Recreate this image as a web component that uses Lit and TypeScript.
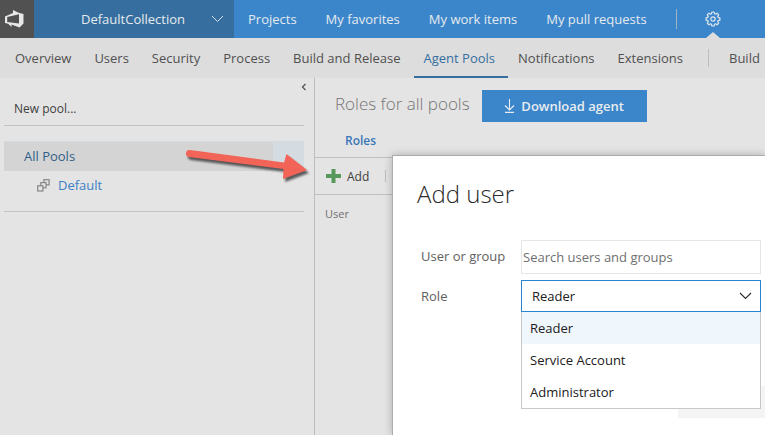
import { LitElement, html, css } from "lit";
import { customElement, state } from "lit/decorators.js";
import { classMap } from "lit/directives/class-map.js";

const HUBS = ["Projects", "My favorites", "My work items", "My pull requests"];
const TABS = [
  "Overview",
  "Users",
  "Security",
  "Process",
  "Build and Release",
  "Agent Pools",
  "Notifications",
  "Extensions",
];
const ROLES = ["Reader", "Service Account", "Administrator"];

const base = css`
  :host {
    display: block;
    box-sizing: border-box;
    font-family: "Open Sans", "Noto Sans", sans-serif;
  }
  *,
  *::before,
  *::after {
    box-sizing: border-box;
  }
  a {
    color: inherit;
    text-decoration: none;
    white-space: nowrap;
  }
  button,
  input,
  select {
    font: inherit;
    margin: 0;
    border: 0;
    border-radius: 0;
    background: none;
    color: inherit;
    white-space: nowrap;
  }
  svg {
    display: block;
    flex: none;
  }
`;

@customElement("top-bar")
class TopBar extends LitElement {
  static styles = [
    base,
    css`
      .bar {
        display: flex;
        height: 38px;
        overflow: hidden;
        background: #3b86ca;
        color: #e6eaee;
        font-size: 13px;
      }
      .logo {
        display: flex;
        align-items: center;
        flex: none;
        width: 34px;
        padding-left: 5px;
        background: #515151;
      }
      .collection {
        display: flex;
        align-items: center;
        justify-content: space-between;
        flex: none;
        width: 200px;
        padding: 0 10px 0 47px;
        background: #366f9f;
      }
      .hubs {
        display: flex;
        align-items: center;
        gap: 29px;
        padding: 0 29px 0 14px;
      }
      .divider {
        flex: none;
        align-self: center;
        width: 1px;
        height: 20px;
        background: #9fb3c6;
      }
      .gear {
        position: relative;
        display: flex;
        align-items: center;
        flex: none;
        padding: 0 8px;
        margin-left: 20px;
      }
      .gear::after {
        content: "";
        position: absolute;
        left: 9px;
        bottom: 0;
        border: 7px solid transparent;
        border-top: 0;
        border-bottom: 6px solid #dddddd;
      }
    `,
  ];

  render() {
    return html`<header class="bar">
      <a class="logo" href="#" aria-label="Home">
        <svg width="20" height="20" viewBox="0 0 20 20" fill="#e8e8e8">
          <path
            fill-rule="evenodd"
            d="M0 7.500 L8 4 V1 L13.500 3.800 L18.500 5 V14.500 L14.500 18.500 L6.500 15.500 V18 L3.200 14.800 L0 14 Z M2.200 8 V13 L14 14.600 V5.300 Z"
          />
        </svg>
      </a>
      <button class="collection">
        DefaultCollection
        <svg width="13" height="8" viewBox="0 0 13 8" fill="none" stroke="#d7e0e8">
          <path d="M1 1 L6.5 6.5 L12 1" />
        </svg>
      </button>
      <nav class="hubs">${HUBS.map((h) => html`<a href="#">${h}</a>`)}</nav>
      <span class="divider"></span>
      <a class="gear" href="#" aria-label="Settings">
        <svg width="16" height="16" viewBox="0 0 16 16" fill="none" stroke="#dfe7ee" stroke-width="1.2" stroke-linejoin="round">
          <path
            d="M6.900 1h2.200l.4 1.700 1.100.5 1.500-1 1.600 1.600-1 1.500.5 1.100 1.700.4v2.400l-1.700.4-.5 1.100 1 1.500-1.600 1.600-1.500-1-1.100.5-.4 1.700H6.900l-.4-1.700-1.100-.5-1.500 1-1.600-1.600 1-1.500-.5-1.100L1.100 9.200V6.800l1.700-.4.5-1.100-1-1.500 1.600-1.600 1.500 1 1.100-.5z"
          />
          <circle cx="8" cy="8" r="2.200" />
        </svg>
      </a>
    </header>`;
  }
}

@customElement("tab-bar")
class TabBar extends LitElement {
  static styles = [
    base,
    css`
      .tabs {
        display: flex;
        height: 40px;
        overflow: hidden;
        padding-left: 5px;
        background: #dddddd;
        color: #505050;
        font-size: 13px;
      }
      .tab {
        flex: none;
        padding: 0 13px 0 10px;
        line-height: 40px;
      }
      .current {
        color: #366f9f;
        border-bottom: 2px solid #366f9f;
      }
      .divider {
        flex: none;
        align-self: center;
        width: 1px;
        height: 18px;
        margin: 0 10px 0 12px;
        background: #bdbdbd;
      }
    `,
  ];

  render() {
    return html`<nav class="tabs">
      ${TABS.map(
        (t) => html`<a href="#" class=${classMap({ tab: true, current: t === "Agent Pools" })}>${t}</a>`
      )}
      <span class="divider"></span>
      <a href="#" class="tab">Build</a>
    </nav>`;
  }
}

@customElement("pool-list")
class PoolList extends LitElement {
  static styles = [
    base,
    css`
      .panel {
        display: flex;
        flex-direction: column;
        padding: 0 10px 0 4px;
        font-size: 12px;
      }
      .collapse {
        align-self: flex-end;
        display: flex;
        padding: 5px 0 0;
        margin-right: -3px;
      }
      .new {
        align-self: flex-start;
        height: 34px;
        padding: 0 10px;
        color: #404040;
      }
      .pools {
        display: flex;
        flex-direction: column;
        padding: 15px 0 12px;
        border: solid #c3c3c3;
        border-width: 1px 0;
        font-size: 13px;
      }
      .all {
        display: block;
        border-right: 31px solid #d5dce1;
        border-top: 1px solid #d5dce1;
        background: #d4d4d4;
        padding-left: 20px;
        line-height: 29px;
        color: #315f88;
      }
      .pool {
        display: flex;
        align-items: center;
        gap: 8px;
        height: 28px;
        padding-left: 33px;
        color: #3c80c4;
      }
    `,
  ];

  render() {
    return html`<aside class="panel">
      <button class="collapse" aria-label="Collapse">
        <svg width="6" height="8" viewBox="0 0 6 8" fill="none" stroke="#505050" stroke-width="1.2">
          <path d="M4.5 1 L1.5 4 L4.5 7" />
        </svg>
      </button>
      <button class="new">New pool...</button>
      <nav class="pools">
        <a class="all" href="#">All Pools</a>
        <a class="pool" href="#">
          <svg width="13" height="13" viewBox="0 0 13 13" fill="#e4e4e4" stroke="#858585" stroke-width="1.2">
            <rect x="6.9" y="0.7" width="5.2" height="5.2" />
            <rect x="3.8" y="3.6" width="5.2" height="5.2" />
            <rect x="0.7" y="6.8" width="5.2" height="5.2" />
          </svg>
          Default
        </a>
      </nav>
    </aside>`;
  }
}

@customElement("roles-panel")
class RolesPanel extends LitElement {
  static styles = [
    base,
    css`
      .head {
        display: flex;
        align-items: flex-start;
        gap: 12px;
        padding: 12px 20px 0;
      }
      .title {
        margin: 0;
        color: #757575;
        font-size: 17px;
        font-weight: 300;
        line-height: 28px;
        white-space: nowrap;
      }
      .download {
        display: flex;
        align-items: center;
        justify-content: center;
        gap: 6px;
        width: 165px;
        height: 32px;
        background: #3b86ca;
        color: #e8ecf0;
        font-size: 13px;
        font-weight: 600;
      }
      .tab {
        display: block;
        padding: 0 30px;
        height: 35px;
        line-height: 38px;
        color: #3b77b8;
        font-size: 12px;
        font-weight: 600;
      }
      .tools {
        display: flex;
        align-items: center;
        gap: 16px;
        height: 38px;
        padding-left: 11px;
        border: solid #c0c0c0;
        border-width: 1px 0;
      }
      .add {
        display: flex;
        align-items: center;
        gap: 6px;
        padding: 0;
        color: #404040;
        font-size: 12px;
      }
      .divider {
        width: 1px;
        height: 12px;
        background: #bdbdbd;
      }
      .grid {
        width: 100%;
        border-spacing: 0;
        font-size: 11px;
      }
      .cell {
        padding: 0 10px;
        text-align: left;
        font-weight: 400;
        line-height: 38px;
        color: #707070;
      }
    `,
  ];

  render() {
    return html`<section>
      <div class="head">
        <h1 class="title">Roles for all pools</h1>
        <button class="download">
          <svg width="11" height="14" viewBox="0 0 11 14" fill="none" stroke="#e8ecf0" stroke-width="1.1">
            <path d="M5.5 0 V11 M1 6.5 L5.5 11 L10 6.5 M1 13.4 H10" />
          </svg>
          Download agent
        </button>
      </div>
      <a class="tab" href="#">Roles</a>
      <div class="tools">
        <button class="add">
          <svg width="15" height="14" viewBox="0 0 15 14" fill="#56995a">
            <path d="M5.5 0h4v5H15v4H9.500v5h-4V9H0V5h5.500z" />
          </svg>
          Add
        </button>
        <span class="divider"></span>
      </div>
      <table class="grid">
        <thead>
          <tr><th class="cell" scope="col">User</th></tr>
        </thead>
      </table>
    </section>`;
  }
}

@customElement("add-user-dialog")
class AddUserDialog extends LitElement {
  @state() private role = "Reader";

  static styles = [
    base,
    css`
      .dialog {
        height: 100%;
        padding: 20px 4px 0 24px;
        border: solid #ababab;
        border-width: 1px 0 0 1px;
        background: #ffffff;
        box-shadow: 0 0 8px rgba(0, 0, 0, 0.25);
        font-size: 13px;
        color: #606060;
      }
      .title {
        margin: 0 0 28px;
        color: #2b2b2b;
        font-size: 24px;
        font-weight: 300;
        line-height: 36px;
      }
      .form {
        display: grid;
        grid-template-columns: 104px 1fr;
        row-gap: 6px;
      }
      .label {
        padding-left: 4px;
        line-height: 32px;
        white-space: nowrap;
      }
      .search {
        width: 100%;
        height: 34px;
        padding: 0 1px;
        border: 1px solid #e6e6e6;
      }
      .search::placeholder {
        color: #707070;
        opacity: 1;
      }
      .picker {
        position: relative;
        color: #202020;
      }
      .select {
        appearance: none;
        display: block;
        width: 100%;
        height: 32px;
        padding: 0 10px;
        border: 1px solid #2a84d2;
      }
      .chevron {
        position: absolute;
        top: 12px;
        right: 9px;
        pointer-events: none;
      }
      .menu {
        position: absolute;
        top: 100%;
        left: 0;
        right: 0;
        z-index: 1;
        margin: 0;
        padding: 0;
        border: 1px solid #c8c8c8;
        border-top: 0;
        background: #ffffff;
        list-style: none;
      }
      .option {
        padding-left: 8px;
        line-height: 32px;
      }
      .chosen {
        background: #eff6fc;
      }
      .actions {
        display: flex;
        justify-content: flex-end;
        margin: 74px -4px 0 0;
      }
      .action {
        width: 87px;
        height: 32px;
        background: #f4f4f4;
      }
    `,
  ];

  render() {
    return html`<section class="dialog" role="dialog" aria-labelledby="title">
      <h2 class="title" id="title">Add user</h2>
      <div class="form">
        <label class="label" for="user">User or group</label>
        <input class="search" id="user" type="text" placeholder="Search users and groups" />
        <label class="label" for="role">Role</label>
        <div class="picker">
          <select
            class="select"
            id="role"
            .value=${this.role}
            @change=${(e: Event) => (this.role = (e.target as HTMLSelectElement).value)}
          >
            ${ROLES.map((r) => html`<option>${r}</option>`)}
          </select>
          <svg class="chevron" width="13" height="8" viewBox="0 0 13 8" fill="none" stroke="#303030" stroke-width="1.2">
            <path d="M1 1 L6.500 6.500 L12 1" />
          </svg>
          <ul class="menu" role="listbox" aria-label="Role">
            ${ROLES.map(
              (r) => html`<li
                role="option"
                aria-selected=${r === this.role}
                class=${classMap({ option: true, chosen: r === this.role })}
                @click=${() => (this.role = r)}
              >${r}</li>`
            )}
          </ul>
        </div>
      </div>
      <div class="actions"><button class="action" aria-label="Add"></button></div>
    </section>`;
  }
}

@customElement("app-root")
class AppRoot extends LitElement {
  static styles = [
    base,
    css`
      :host {
        position: relative;
        display: flex;
        flex-direction: column;
        min-height: 100vh;
        overflow: hidden;
        background: #e4e4e4;
      }
      .body {
        display: grid;
        grid-template-columns: 314px 1fr;
        flex: 1;
      }
      .main {
        min-width: 0;
        border-left: 1px solid #bdbdbd;
      }
      .dialog {
        position: absolute;
        top: 155px;
        left: 392px;
        right: 0;
        bottom: 0;
      }
      .pointer {
        position: absolute;
        top: 144px;
        left: 182px;
        pointer-events: none;
        filter: drop-shadow(2px 3px 1px rgba(0, 0, 0, 0.6));
      }
    `,
  ];

  render() {
    return html`
      <top-bar></top-bar>
      <tab-bar></tab-bar>
      <div class="body">
        <pool-list></pool-list>
        <roles-panel class="main"></roles-panel>
      </div>
      <add-user-dialog class="dialog"></add-user-dialog>
      <svg class="pointer" width="132" height="42" viewBox="0 0 132 42" fill="#f26457" aria-hidden="true">
        <path d="M8 6 L102 18.500 L104.500 10 L125 26 L101 35 L101.500 25 L7 13 A3.500 3.500 0 0 1 8 6 Z" />
      </svg>
    `;
  }
}
